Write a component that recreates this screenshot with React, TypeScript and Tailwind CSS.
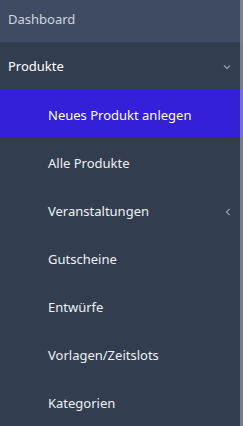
import React from "react";

const subItems = [
  { label: "Neues Produkt anlegen", active: true },
  { label: "Alle Produkte" },
  { label: "Veranstaltungen", chevron: true },
  { label: "Gutscheine" },
  { label: "Entwürfe" },
  { label: "Vorlagen/Zeitslots" },
  { label: "Kategorien" },
];

function ChevronDown() {
  return (
    <svg width="8" height="6" viewBox="0 0 8 6" fill="none" className="text-[#8a94a6]">
      <path d="M1 1.5 L4 4.5 L7 1.5" stroke="currentColor" strokeWidth="1.4" />
    </svg>
  );
}

function ChevronLeft() {
  return (
    <svg width="6" height="8" viewBox="0 0 6 8" fill="none" className="text-[#8a94a6]">
      <path d="M4.5 1 L1.5 4 L4.5 7" stroke="currentColor" strokeWidth="1.4" />
    </svg>
  );
}

export default function App() {
  return (
    <div
      className="relative w-[243px] h-[426px] overflow-hidden bg-[#323e50] text-[13px]"
      style={{ fontFamily: '"Noto Sans", "Open Sans", sans-serif' }}
    >
      {/* Dashboard */}
      <div className="h-[42px] flex items-center px-2 pb-[2px] bg-[#3e4b63] text-[#cfd6e0]">Dashboard</div>

      {/* Produkte group */}
      <div className="h-[48px] flex items-center justify-between pl-2 pr-[12px] pt-[2px] text-white">
        <span>Produkte</span>
        <ChevronDown />
      </div>

      <ul>
        {subItems.map((item) => (
          <li
            key={item.label}
            className={
              "h-[48px] flex items-center justify-between pl-[48px] pr-[12px] pt-1 " +
              (item.active ? "bg-[#3320d8] text-white" : "text-[#eef1f5]")
            }
          >
            <span>{item.label}</span>
            {item.chevron && <ChevronLeft />}
          </li>
        ))}
      </ul>

      {/* scrollbar strip */}
      <div className="absolute right-0 top-0 h-full w-[3px] bg-[#a3a9b5]/60" />
    </div>
  );
}
